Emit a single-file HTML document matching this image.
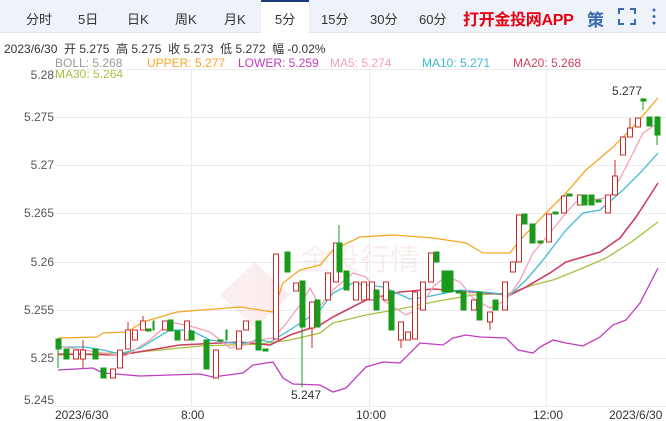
<!DOCTYPE html>
<html><head><meta charset="utf-8"><style>
body{margin:0;width:666px;height:421px;overflow:hidden;background:#fff;font-family:"Liberation Sans","Noto Sans CJK SC",sans-serif;position:relative}
.bar{position:absolute;left:0;top:0;width:666px;height:32px;background:#eef3fa;border-bottom:1px solid #dde4ee}
.t{position:absolute;top:9px;font-size:13px;color:#333}
.sel{position:absolute;left:261px;top:0;width:48px;height:33px;background:#fff;border-top:2px solid #1a3a7a;box-sizing:border-box}
.a{position:absolute;font-size:12px;white-space:nowrap}
</style></head><body>
<div class="bar"></div>
<div class="sel"></div>
<div class="t" style="left:26px">分时</div>
<div class="t" style="left:78px">5日</div>
<div class="t" style="left:127px">日K</div>
<div class="t" style="left:175px">周K</div>
<div class="t" style="left:224px">月K</div>
<div class="t" style="left:275px">5分</div>
<div class="t" style="left:321px">15分</div>
<div class="t" style="left:370px">30分</div>
<div class="t" style="left:419px">60分</div>
<div style="position:absolute;left:463px;top:6px;font-size:16px;font-weight:bold;color:#e60012;letter-spacing:-0.3px">打开金投网APP</div>
<div style="position:absolute;left:587px;top:6px;font-size:17px;color:#3a6ab0;font-weight:bold">策</div>
<svg style="position:absolute;left:618px;top:8px" width="18" height="17"><path d="M1 6V1h5M12 1h5v5M17 11v5h-5M6 16H1v-5" fill="none" stroke="#3a6ab0" stroke-width="2"/></svg>
<svg style="position:absolute;left:651px;top:8px" width="6" height="17"><circle cx="3" cy="2" r="1.5" fill="#3a6ab0"/><circle cx="3" cy="8.5" r="1.5" fill="#3a6ab0"/><circle cx="3" cy="15" r="1.5" fill="#3a6ab0"/></svg>
<div class="a" style="left:4px;top:40px;color:#333">2023/6/30 &nbsp;开 5.275 &nbsp;高 5.275 &nbsp;收 5.273 &nbsp;低 5.272 &nbsp;幅 -0.02%</div>
<div class="a" style="left:55px;top:56px;color:#999">BOLL: 5.268</div>
<div class="a" style="left:147px;top:56px;color:#f5a623">UPPER: 5.277</div>
<div class="a" style="left:238px;top:56px;color:#c03cc0">LOWER: 5.259</div>
<div class="a" style="left:330px;top:56px;color:#f4a0b8">MA5: 5.274</div>
<div class="a" style="left:422px;top:56px;color:#3bbcd0">MA10: 5.271</div>
<div class="a" style="left:513px;top:56px;color:#d04060">MA20: 5.268</div>
<div class="a" style="left:55px;top:67px;color:#a8c040">MA30: 5.264</div>
<svg style="position:absolute;left:0;top:0" width="666" height="421">
<g stroke="#ebebeb" stroke-width="1">
<line x1="55" y1="69.5" x2="666" y2="69.5"/><line x1="55" y1="117.5" x2="666" y2="117.5"/><line x1="55" y1="165.5" x2="666" y2="165.5"/><line x1="55" y1="213.5" x2="666" y2="213.5"/><line x1="55" y1="262.5" x2="666" y2="262.5"/><line x1="55" y1="310.5" x2="666" y2="310.5"/><line x1="55" y1="358.5" x2="666" y2="358.5"/><line x1="55" y1="406.5" x2="666" y2="406.5"/>
<line x1="191.5" y1="69" x2="191.5" y2="406"/><line x1="369.5" y1="69" x2="369.5" y2="406"/><line x1="546.5" y1="69" x2="546.5" y2="406"/>
</g>
<g font-size="12" fill="#555" text-anchor="end" font-family="Liberation Sans">
<text x="54" y="79">5.28</text><text x="54" y="121">5.275</text><text x="54" y="169">5.27</text><text x="54" y="217">5.265</text><text x="54" y="266">5.26</text><text x="54" y="314">5.255</text><text x="54" y="362">5.25</text><text x="54" y="404">5.245</text>
</g>
<g font-size="12" fill="#333" font-family="Liberation Sans">
<text x="55" y="419">2023/6/30</text><text x="181" y="419">8:00</text><text x="356" y="419">10:00</text><text x="533" y="419">12:00</text><text x="609" y="419">2023/6/30</text>
<text x="612" y="95">5.277</text><text x="291" y="399">5.247</text>
</g>
<g opacity="0.08" fill="#c0392b"><path d="M220 295L255 262L290 295L255 328Z"/><text x="300" y="270" font-size="30" font-family="Noto Sans CJK SC">金投行情</text></g>
<g fill="none" stroke-width="1.3">
<polyline stroke="#f5a623" points="58,338 97,337 103,333 127,332 143,322 177,312 240,307 273,312 283,283 300,270 320,265 333,250 360,237 393,235 433,238 466,243 483,253 510,253 520,240 546,213 566,193 586,170 613,147 633,127 658,98"/>
<polyline stroke="#c03cc0" points="58,370 93,368 103,373 140,376 200,374 213,377 243,373 253,365 273,362 283,378 293,384 320,385 333,392 346,388 366,367 383,362 400,363 420,343 443,345 453,338 466,335 480,337 506,338 518,350 533,353 540,347 553,340 566,343 583,346 600,337 613,325 626,320 640,303 658,268"/>
<polyline stroke="#a8c040" points="58,355 140,352 200,346 260,344 290,340 320,333 333,323 366,315 400,309 433,302 473,295 510,293 533,285 553,280 583,268 606,258 630,243 658,222"/>
<polyline stroke="#d04060" stroke-width="1.6" points="58,354 120,355 180,345 240,342 270,345 290,335 320,325 333,317 366,300 400,292 433,289 473,292 510,295 526,287 550,273 566,262 600,252 620,238 636,217 658,183"/>
<polyline stroke="#3bbcd0" points="58,347 85,347 103,350 120,354 140,348 170,330 190,330 210,340 240,344 260,340 270,342 290,330 305,320 320,310 333,293 353,283 383,287 410,299 426,297 460,290 493,293 510,295 526,280 543,260 566,230 583,213 600,210 623,190 640,173 658,153"/>
<polyline stroke="#f4a0b8" points="58,346 110,354 125,356 150,340 170,322 190,326 210,332 230,348 245,345 255,340 273,338 285,325 300,305 310,288 320,306 333,290 353,273 366,277 383,300 406,315 420,308 433,287 446,276 460,282 473,298 490,308 506,300 520,280 533,253 550,233 566,213 576,202 593,200 610,197 626,167 643,133 658,123"/>
</g>
<g stroke="#cc2a2a" fill="#fff" stroke-width="1">
<path d="M73.5 350h5v9h-5z M80.5 350h5v9h-5z M83 340v10 M83 359v9 M110.5 369h5v9h-5z M117.5 350h5v18h-5z M125.5 330h5v19h-5z M128 322v8 M132.5 330h5v10h-5z M140.5 321h5v9h-5z M143 316v5 M162.5 321h5v9h-5z M184.5 321h5v19h-5z M213.5 350h5v28h-5z M236.5 331h5v18h-5z M243.5 321h5v9h-5z M273.5 254h5v85h-5z M293.5 283h5v8h-5z M309.5 302h5v26h-5z M312 328v20 M325.5 273h5v27h-5z M333.5 243h5v39h-5z M353.5 282h5v18h-5z M361.5 282h5v18h-5z M369.5 282h5v18h-5z M383.5 282h5v18h-5z M398.5 322h5v18h-5z M401 340v8 M405.5 332h5v8h-5z M412.5 292h5v47h-5z M420.5 282h5v28h-5z M428.5 253h5v29h-5z M471.5 300h5v10h-5z M487.5 312h5v10h-5z M490 322v8 M502.5 282h5v28h-5z M510.5 262h5v10h-5z M516.5 215h5v47h-5z M546.5 214h5v28h-5z M561.5 196h5v17h-5z M577.5 195h5v10h-5z M605.5 195h5v18h-5z M612.5 176h5v19h-5z M615 160v16 M620.5 137h5v18h-5z M627.5 128h5v9h-5z M630 118v10 M635.5 118h5v9h-5z"/>
</g>
<g fill="#1a9a1a" stroke="#1a9a1a" stroke-width="1">
<path d="M56 339h5v10h-5z M58 349v19 M64 349h5v10h-5z M93 349h5v10h-5z M101 368h5v10h-5z M146 329h5v2h-5z M153 321h1v9h-1z M168 320h5v11h-5z M175 331h5v9h-5z M189 331h5v9h-5z M204 340h5v29h-5z M218 340h5v1h-5z M226 330h1v10h-1z M256 321h5v29h-5z M263 349h5v2h-5z M285 252h5v20h-5z M300 281h5v46h-5z M302 327v60 M315 300h5v27h-5z M337 243h5v29h-5z M339 225v18 M344 271h5v19h-5z M374 290h5v20h-5z M389 291h5v39h-5z M434 252h5v10h-5z M442 271h5v21h-5z M448 271h5v21h-5z M456 291h5v2h-5z M461 292h5v18h-5z M477 292h5v28h-5z M493 300h5v10h-5z M522 214h5v10h-5z M530 224h5v19h-5z M538 241h5v2h-5z M553 212h5v2h-5z M567 194h5v2h-5z M582 195h5v10h-5z M589 195h5v10h-5z M596 200h5v2h-5z M641 99h5v2h-5z M643 98v12 M647 117h5v9h-5z M655 117h5v18h-5z M657 135v10"/>
</g>
</svg>
</body></html>
